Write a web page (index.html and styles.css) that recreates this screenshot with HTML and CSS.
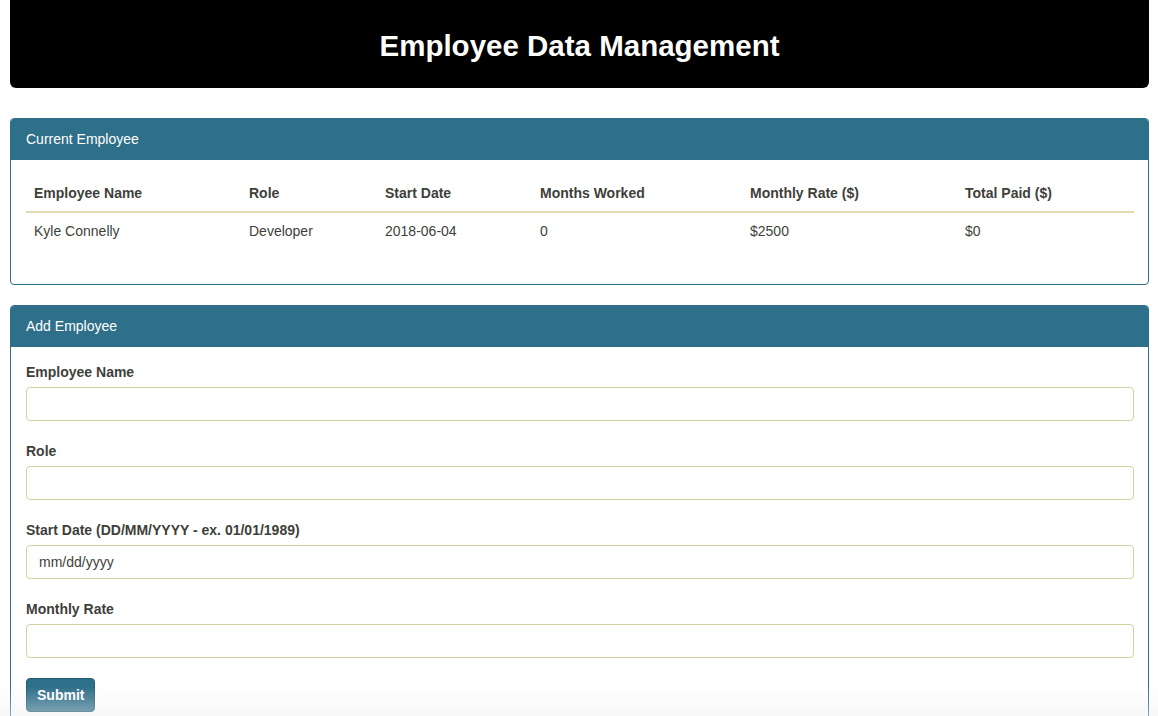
FILE: index.html
```html
<!DOCTYPE html>
<html>
<head>
<meta charset="utf-8">
<title>Employee Data Management</title>
<link rel="stylesheet" href="styles.css">
</head>
<body>
<div class="page">
  <header class="jumbo">
    <h1 class="title">Employee Data Management</h1>
  </header>

  <section class="panel">
    <div class="panel-head">Current Employee</div>
    <div class="panel-body table-body">
      <table class="emp-table">
        <thead>
          <tr>
            <th class="c1">Employee Name</th>
            <th class="c2">Role</th>
            <th class="c3">Start Date</th>
            <th class="c4">Months Worked</th>
            <th class="c5">Monthly Rate ($)</th>
            <th class="c6">Total Paid ($)</th>
          </tr>
        </thead>
        <tbody>
          <tr>
            <td>Kyle Connelly</td>
            <td>Developer</td>
            <td>2018-06-04</td>
            <td>0</td>
            <td>$2500</td>
            <td>$0</td>
          </tr>
        </tbody>
      </table>
    </div>
  </section>

  <section class="panel">
    <div class="panel-head">Add Employee</div>
    <form class="panel-body form-body">
      <div class="group">
        <label class="lbl">Employee Name</label>
        <input class="field" type="text">
      </div>
      <div class="group">
        <label class="lbl">Role</label>
        <input class="field" type="text">
      </div>
      <div class="group">
        <label class="lbl">Start Date (DD/MM/YYYY - ex. 01/01/1989)</label>
        <div class="field date-field">mm/dd/yyyy</div>
      </div>
      <div class="group">
        <label class="lbl">Monthly Rate</label>
        <input class="field" type="text">
      </div>
      <button class="btn" type="button">Submit</button>
    </form>
  </section>
</div>
<div class="fade"></div>
</body>
</html>
```
FILE: styles.css
```css
* { box-sizing: border-box; }
html, body { margin: 0; padding: 0; background: #fff; }
body {
  font-family: "Liberation Sans", Arial, sans-serif;
  font-size: 14px;
  line-height: 20px;
  color: #3e3f3a;
  overflow: hidden;
  height: 716px;
}
.page { padding: 0 9px 0 10px; }
.jumbo {
  background: #000;
  height: 88px;
  border-radius: 0 0 6px 6px;
  display: flex;
  align-items: center;
  justify-content: center;
  margin-bottom: 30px;
}
.title {
  margin: 0;
  color: #fff;
  font-size: 29.5px;
  font-weight: bold;
  line-height: 36px;
  padding-top: 4px;
}
.panel {
  border: 1px solid #2e6f8a;
  border-radius: 4px;
  margin-bottom: 20px;
  background: #fff;
  overflow: hidden;
}
.panel-head {
  background: #2e6f8a;
  color: #fff;
  height: 41px;
  padding: 10px 15px;
  font-size: 14px;
  line-height: 21px;
}
.panel-body { padding: 15px; }
.table-body { padding: 15px 14px 35px 15px; }
.emp-table {
  width: 100%;
  border-collapse: collapse;
}
.emp-table th, .emp-table td {
  text-align: left;
  padding: 8px;
  line-height: 20px;
}
.emp-table th {
  font-weight: bold;
  border-bottom: 2px solid #dedcb0;
}
.emp-table td { padding-top: 8px; padding-bottom: 8px; }
.c1 { width: 215px; }
.c2 { width: 136px; }
.c3 { width: 155px; }
.c4 { width: 210px; }
.c5 { width: 215px; }
.form-body { padding: 15px 14px 15px 15px; }
.group { margin-bottom: 20px; }
.lbl {
  display: block;
  font-weight: bold;
  margin-bottom: 5px;
  line-height: 20px;
}
.field {
  display: block;
  width: 100%;
  height: 34px;
  border: 1px solid #d3d2a0;
  border-radius: 4px;
  background: #fff;
  padding: 6px 12px;
  font-family: inherit;
  font-size: 14px;
  color: #3e3f3a;
  outline: none;
}
.date-field { line-height: 20px; }
.btn {
  display: block;
  height: 34px;
  padding: 6px 10px;
  background: #2e6f8a;
  border: 1px solid #235a70;
  border-radius: 4px;
  color: #fff;
  font-family: inherit;
  font-size: 14px;
  font-weight: bold;
  line-height: 20px;
}
.fade {
  position: fixed;
  left: 0;
  right: 0;
  bottom: 0;
  height: 30px;
  background: linear-gradient(to bottom, rgba(238,238,238,0), rgba(238,238,238,0.45));
  pointer-events: none;
}
```
